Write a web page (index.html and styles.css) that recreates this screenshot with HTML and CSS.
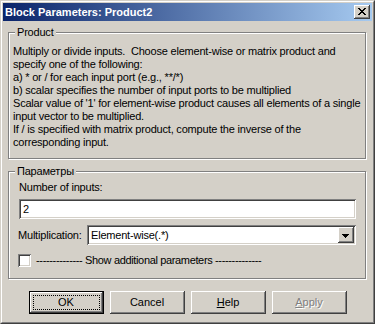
FILE: index.html
```html
<!DOCTYPE html>
<html>
<head>
<meta charset="utf-8">
<link rel="stylesheet" href="styles.css">
</head>
<body>
<div class="window">
  <div class="frame">
    <div class="titlebar">
      <span class="title">Block Parameters: Product2</span>
      <span class="close"><svg width="8" height="7" viewBox="0 0 8 7" shape-rendering="crispEdges"><path d="M0 0h2v1h-2zM6 0h2v1h-2zM1 1h2v1h-2zM5 1h2v1h-2zM2 2h4v1h-4zM3 3h2v1h-2zM2 4h4v1h-4zM1 5h2v1h-2zM5 5h2v1h-2zM0 6h2v1h-2zM6 6h2v1h-2z" fill="#000"/></svg></span>
    </div>
    <div class="content">
      <div class="group product">
        <div class="legend">Product</div>
        <p class="desc">Multiply or divide inputs.&nbsp; Choose element-wise or matrix product and<br>specify one of the following:<br>a) * or / for each input port (e.g., **/*)<br>b) scalar specifies the number of input ports to be multiplied<br>Scalar value of '1' for element-wise product causes all elements of a single<br>input vector to be multiplied.<br>If / is specified with matrix product, compute the inverse of the<br>corresponding input.</p>
      </div>
      <div class="group params">
        <div class="legend">Параметры</div>
        <div class="label num-label">Number of inputs:</div>
        <div class="field text-field">2</div>
        <div class="mult-row">
          <span class="label mult-label">Multiplication:</span>
          <div class="field select-field">
            <span class="select-text">Element-wise(.*)</span>
            <span class="drop-btn"><svg width="7" height="4" viewBox="0 0 7 4" shape-rendering="crispEdges"><path d="M0 0h7v1h-7zM1 1h5v1h-5zM2 2h3v1h-3zM3 3h1v1h-1z" fill="#000"/></svg></span>
          </div>
        </div>
        <div class="check-row">
          <span class="checkbox"></span>
          <span class="label dash-label">-------------- Show additional parameters --------------</span>
        </div>
      </div>
      <div class="buttons">
        <div class="btn default"><span class="focus">OK</span></div>
        <div class="btn">Cancel</div>
        <div class="btn"><span><u>H</u>elp</span></div>
        <div class="btn disabled"><span><u>A</u>pply</span></div>
      </div>
    </div>
  </div>
</div>
</body>
</html>
```

FILE: styles.css
```css
* { box-sizing: border-box; }

body {
  margin: 0;
  background: #D4D0C8;
  font-family: "Liberation Sans", Arial, sans-serif;
  font-size: 11px;
  color: #000;
}

.window {
  width: 375px;
  height: 324px;
  border: 1px solid;
  border-color: #D4D0C8 #404040 #404040 #D4D0C8;
  background: #D4D0C8;
}

.frame {
  height: 100%;
  border: 1px solid;
  border-color: #FFFFFF #808080 #808080 #FFFFFF;
  padding: 1px;
  display: flex;
  flex-direction: column;
}

.titlebar {
  height: 18px;
  flex: none;
  background: linear-gradient(to right, #0A246A, #A6CAF0);
  display: flex;
  align-items: center;
  justify-content: space-between;
  padding: 0 2px 0 2px;
}

.title {
  color: #FFFFFF;
  font-weight: bold;
  font-size: 11px;
  line-height: 13px;
}

.close {
  width: 16px;
  height: 14px;
  background: #D4D0C8;
  box-shadow: inset -1px -1px 0 #404040, inset 1px 1px 0 #FFFFFF, inset -2px -2px 0 #808080;
  display: flex;
  align-items: center;
  justify-content: center;
  padding: 0 1px 1px 0;
}

.close svg { display: block; }

.content {
  padding: 11px 6px 0 5px;
  display: flex;
  flex-direction: column;
  letter-spacing: -0.2px;
}

.group {
  position: relative;
  border: 1px solid #808080;
  box-shadow: inset 1px 1px 0 #FFFFFF, 1px 1px 0 #FFFFFF;
}

.legend {
  position: absolute;
  top: -7px;
  left: 6px;
  padding: 0 2px;
  line-height: 13px;
  background: #D4D0C8;
}

.product {
  height: 127px;
  padding: 12px 4px 0 4px;
}

.desc {
  margin: 0;
  line-height: 13px;
  white-space: nowrap;
}

.params {
  margin-top: 12px;
  height: 108px;
  padding: 9px 9px 0 9px;
}

.label { line-height: 13px; white-space: nowrap; }

.num-label { padding-left: 1px; }

.dash-label { letter-spacing: -0.35px; }

.field {
  background: #FFFFFF;
  box-shadow: inset 1px 1px 0 #808080, inset -1px -1px 0 #FFFFFF, inset 2px 2px 0 #404040, inset -2px -2px 0 #D4D0C8;
}

.text-field {
  margin-top: 5px;
  margin-left: 1px;
  height: 20px;
  line-height: 20px;
  padding-left: 4px;
}

.mult-row {
  margin-top: 6px;
  display: flex;
  align-items: center;
}

.mult-label { width: 69px; flex: none; }

.select-field {
  flex: 1;
  height: 20px;
  padding: 2px;
  display: flex;
  align-items: center;
}

.select-text {
  flex: 1;
  padding-left: 2px;
  line-height: 16px;
}

.drop-btn {
  width: 16px;
  height: 16px;
  background: #D4D0C8;
  box-shadow: inset -1px -1px 0 #404040, inset 1px 1px 0 #FFFFFF, inset -2px -2px 0 #808080;
  display: flex;
  align-items: center;
  justify-content: center;
  padding: 1px 1px 0 0;
}

.drop-btn svg { display: block; }

.check-row {
  margin-top: 9px;
  display: flex;
  align-items: center;
  gap: 5px;
}

.checkbox {
  width: 13px;
  height: 13px;
  background: #FFFFFF;
  box-shadow: inset 1px 1px 0 #808080, inset -1px -1px 0 #FFFFFF, inset 2px 2px 0 #404040, inset -2px -2px 0 #D4D0C8;
}

.buttons {
  margin-top: 12px;
  display: flex;
  justify-content: center;
  gap: 6px;
  padding-left: 1px;
}

.btn {
  width: 75px;
  height: 23px;
  background: #D4D0C8;
  box-shadow: inset -1px -1px 0 #404040, inset 1px 1px 0 #FFFFFF, inset -2px -2px 0 #808080;
  display: flex;
  align-items: center;
  justify-content: center;
  line-height: 13px;
  letter-spacing: 0;
}

.btn.default {
  border: 1px solid #000;
  padding: 3px;
}

.focus {
  flex: 1;
  align-self: stretch;
  border: 1px dotted #000;
  display: flex;
  align-items: center;
  justify-content: center;
}

.btn.disabled {
  color: #808080;
  text-shadow: 1px 1px 0 #FFFFFF;
}
```
